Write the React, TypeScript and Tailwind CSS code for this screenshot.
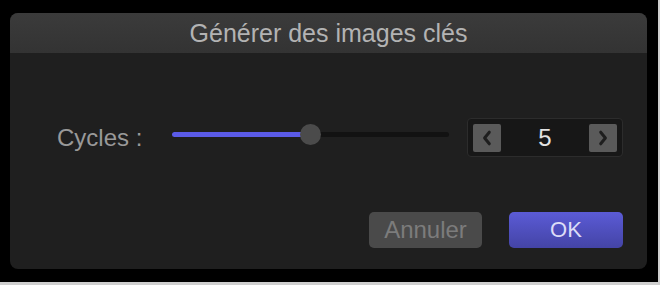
import React from "react";

function Chevron({ dir }: { dir: "left" | "right" }) {
  return (
    <svg width="12" height="18" viewBox="0 0 12 18" fill="none">
      <path
        d={dir === "left" ? "M8.3 3.2 L3.6 9 L8.3 14.8" : "M3.7 3.2 L8.4 9 L3.7 14.8"}
        stroke="#1e1e1e"
        strokeWidth="3"
        strokeLinecap="round"
        strokeLinejoin="round"
      />
    </svg>
  );
}

export default function App() {
  return (
    <div
      className="w-[660px] h-[285px] bg-black border-r-2 border-b-[3px] border-[#cfcfcf] pl-[10px] pt-[13px]"
      style={{ fontFamily: '"Liberation Sans", Arial, sans-serif' }}
    >
      <div className="w-[637px] h-[256px] rounded-[8px] overflow-hidden bg-[#1f1f1f] flex flex-col">
        <div className="h-[40px] shrink-0 bg-gradient-to-b from-[#3b3b3b] to-[#333333] flex items-center justify-center">
          <span className="text-[25px] leading-none text-[#b3b3b3]">Générer des images clés</span>
        </div>
        <div className="flex-1 flex flex-col pl-[47px] pr-[24px] pt-[65px]">
          <div className="flex items-center h-[39px]">
            <span className="w-[115px] shrink-0 text-[24px] leading-none text-[#999999]">Cycles :</span>
            <div className="relative w-[277px] h-[21px] mb-[7px] flex items-center shrink-0">
              <div className="w-full h-[5px] rounded-full bg-[#121212] flex">
                <div className="w-[139px] h-full rounded-full bg-[#5b5be8]" />
              </div>
              <div className="absolute left-[128px] top-0 w-[21px] h-[21px] rounded-full bg-[#4b4b4b]" />
            </div>
            <div className="ml-[18px] w-[156px] h-[39px] rounded-[4px] border border-[#2c2c2c] bg-[#171717] flex items-center justify-between px-[5px]">
              <div className="w-[28px] h-[28px] rounded-[2px] bg-[#5a5a5a] flex items-center justify-center">
                <Chevron dir="left" />
              </div>
              <span className="text-[24px] leading-none text-[#e2e2e2]">5</span>
              <div className="w-[28px] h-[28px] rounded-[2px] bg-[#5a5a5a] flex items-center justify-center">
                <Chevron dir="right" />
              </div>
            </div>
          </div>
          <div className="flex justify-end gap-[27px] mt-[55px]">
            <button className="w-[113px] h-[36px] rounded-[5px] bg-[#4a4a4a] text-[24px] leading-none text-[#7c7c7c]">
              Annuler
            </button>
            <button className="w-[114px] h-[36px] rounded-[5px] bg-gradient-to-b from-[#5b5bd6] to-[#4444a6] text-[22px] leading-none text-[#dcdcf7]">
              OK
            </button>
          </div>
        </div>
      </div>
    </div>
  );
}
